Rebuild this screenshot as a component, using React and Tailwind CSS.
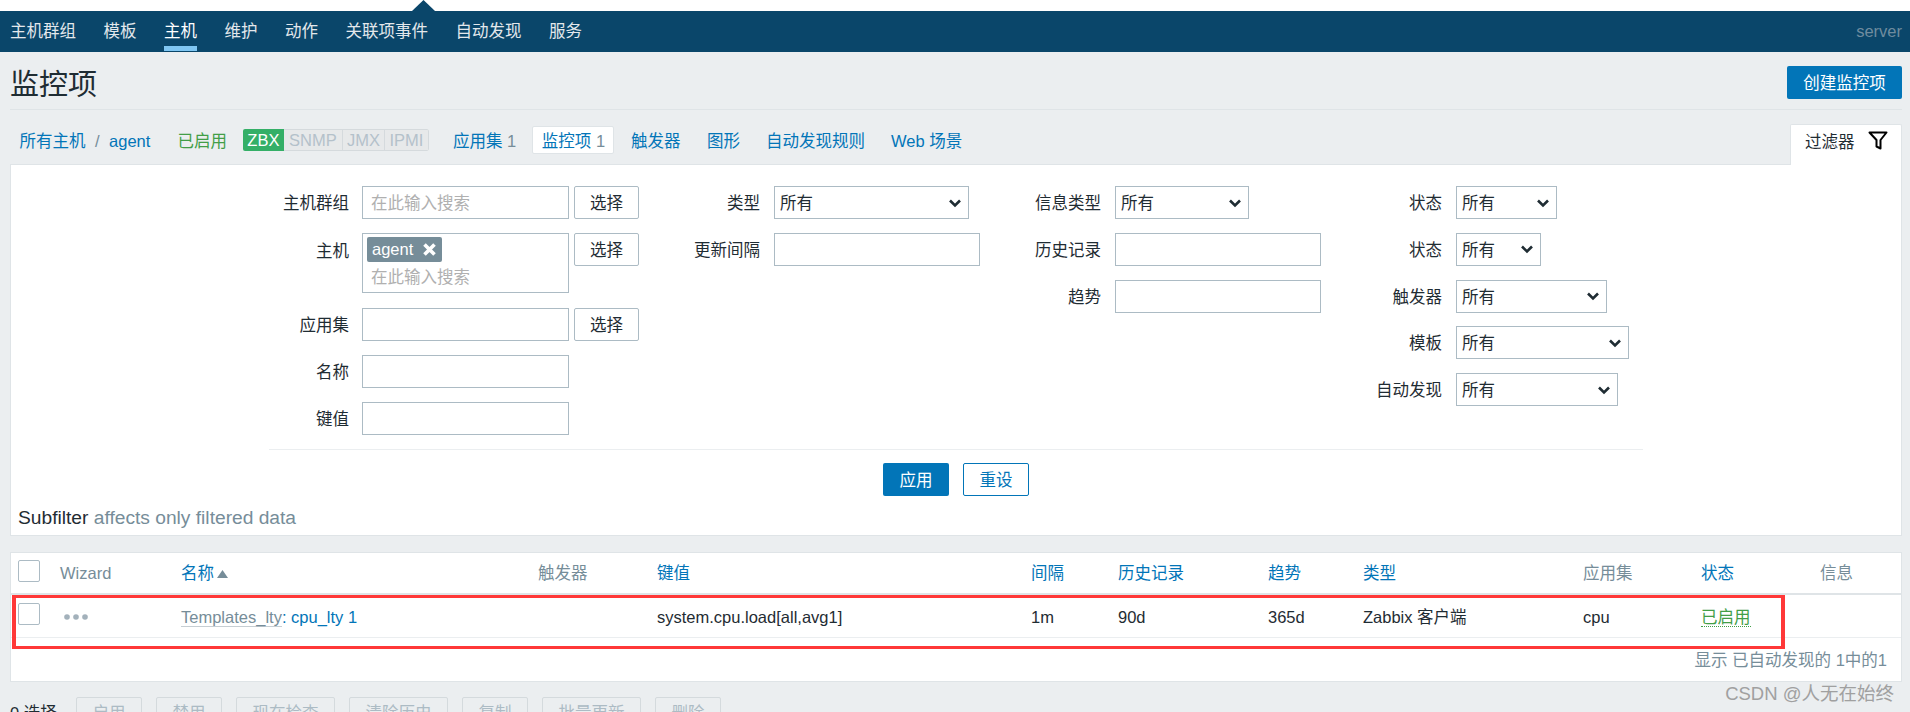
import { useState } from 'react';

const navItems = ['主机群组', '模板', '主机', '维护', '动作', '关联项事件', '自动发现', '服务'];
const bottomButtons = [
  ['启用', 'w-[66px]'],
  ['禁用', 'w-[66px]'],
  ['现在检查', 'w-[99px]'],
  ['清除历史', 'w-[99px]'],
  ['复制', 'w-[66px]'],
  ['批量更新', 'w-[99px]'],
  ['删除', 'w-[66px]'],
];

const Chevron = () => (
  <svg width="12" height="10" viewBox="0 0 12 10" fill="none" stroke="#1f2c33" strokeWidth="2.6">
    <path d="M1 2.5 L6 7.5 L11 2.5" />
  </svg>
);

const Field = ({ label, labelWidth, gap = 'mr-[13px]', children, tall }) => (
  <div className={`flex ${tall ? 'h-[60px] mb-px items-start' : 'h-[33px] items-center'}`}>
    <label className={`${labelWidth} ${gap} pt-[2px] shrink-0 text-right ${tall ? 'leading-[33px]' : ''}`}>{label}</label>
    {children}
  </div>
);

const Input = ({ width, placeholder }) => (
  <div className={`${width} h-[33px] border border-[#acbbc4] bg-white pl-[8px] leading-[33px] text-[#b0b0b0]`}>
    {placeholder}
  </div>
);

const Select = ({ width }) => (
  <div className={`${width} h-[33px] border border-[#acbbc4] bg-white pl-[5px] pr-[7px] flex items-center justify-between`}>
    <span className="pt-[2px]">所有</span>
    <Chevron />
  </div>
);

const PickButton = () => (
  <button className="ml-[5px] w-[65px] h-[33px] pt-[2px] border border-[#acbbc4] rounded-[2px] bg-white text-[#1f2c33]">选择</button>
);

const App = () => {
  const [activeNav] = useState('主机');

  return (
    <div className="relative w-[1910px] h-[712px] overflow-hidden bg-[#ebeef0] text-[16.5px] text-[#1f2c33] font-['Liberation_Sans','Noto_Sans_CJK_SC',sans-serif]">
      {/* top strip with the little arrow */}
      <div className="relative h-[11px] bg-white">
        <svg className="absolute left-[412px] top-0" width="23" height="11" viewBox="0 0 23 11">
          <path d="M11.5 0 L23 11 H0 Z" fill="#0a466a" />
        </svg>
      </div>

      {/* nav */}
      <nav className="h-[41px] bg-[#0a466a] flex items-center justify-between pl-[10px] pr-[8px]">
        <div className="flex h-full gap-[27.5px]">
          {navItems.map((item) => (
            <a key={item} className={`relative flex items-center h-full ${item === activeNav ? 'text-white' : 'text-[#e3e8ec]'}`}>
              {item}
              {item === activeNav && <span className="absolute left-0 right-0 bottom-px h-[5px] bg-[#7fc6f2]" />}
            </a>
          ))}
        </div>
        <span className="text-[#6f8c9f]">server</span>
      </nav>

      {/* title */}
      <header className="ml-[10px] mr-[8px] pt-[14px] h-[58px] border-b border-[#dfe4e7] flex justify-between items-start">
        <h1 className="text-[29px] leading-[33px] pt-[3px] font-normal">监控项</h1>
        <button className="w-[115px] h-[33px] pt-px bg-[#0275b8] text-white rounded-[2px]">创建监控项</button>
      </header>

      {/* sub nav */}
      <div className="ml-[10px] mr-[8px] h-[54px] flex items-end justify-between">
        <div className="h-[60px] flex items-center pl-[9.5px] self-start text-[#0275b8]">
          <a className="pt-[2px]">所有主机</a>
          <span className="ml-[9.5px] pt-[2px] text-[#768d99]">/</span>
          <a className="ml-[9.5px] pt-[2px]">agent</a>
          <span className="ml-[27px] pt-[2px] text-[#429e47]">已启用</span>
          <div className="ml-[16px] flex h-[22px] leading-[20px] rounded-[2px] overflow-hidden">
            <span className="w-[41px] text-center leading-[22px] bg-[#34af67] text-white">ZBX</span>
            <span className="w-[59px] text-center bg-[#e7e9ea] text-[#b4c1ca] border border-l-0 border-[#d5dadd]">SNMP</span>
            <span className="w-[42px] text-center bg-[#e7e9ea] text-[#b4c1ca] border border-l-0 border-[#d5dadd]">JMX</span>
            <span className="w-[44px] text-center bg-[#e7e9ea] text-[#b4c1ca] border border-l-0 border-[#d5dadd] rounded-r-[2px]">IPMI</span>
          </div>
          <a className="ml-[24px] pt-[2px]">应用集 <span className="text-[#768d99]">1</span></a>
          <a className="ml-[16.3px] w-[82px] h-[28px] leading-[28px] text-center bg-white border border-[#dfe4e7] rounded-[2px]">监控项 <span className="text-[#768d99]">1</span></a>
          <a className="ml-[16.5px] pt-[2px]">触发器</a>
          <a className="ml-[26.5px] pt-[2px]">图形</a>
          <a className="ml-[26px] pt-[2px]">自动发现规则</a>
          <a className="ml-[26px] pt-[2px]">Web 场景</a>
        </div>
        <div className="w-[112px] h-[41px] -mb-px relative bg-white rounded-t-[2px] border border-b-0 border-[#dfe4e7] flex items-start pl-[14px] pt-[3px]">
          <span className="leading-[28px]">过滤器</span>
          <svg className="ml-[13px] mt-[3px]" width="20" height="19" viewBox="0 0 20 19" fill="none" stroke="#000" strokeWidth="2">
            <path d="M1.5 1.5 H18.5 L12.5 9 V17.5 L8.5 15.5 V9 Z" strokeLinejoin="round" />
          </svg>
        </div>
      </div>

      {/* filter panel */}
      <section className="ml-[10px] mr-[8px] h-[372px] bg-white border border-[#dfe4e7] pt-[21px]">
        <div className="flex h-[249px]">
          <div className="w-[669px] flex flex-col gap-[14px]">
            <Field label="主机群组" labelWidth="w-[338px]">
              <Input width="w-[207px]" placeholder="在此输入搜索" />
              <PickButton />
            </Field>
            <Field label="主机" labelWidth="w-[338px]" tall>
              <div className="w-[207px] h-[60px] border border-[#acbbc4] bg-white pl-[4px] pt-[3px]">
                <div className="w-[75px] h-[25px] bg-[#768d99] rounded-[2px] text-white flex items-center pl-[5px] gap-[10px]">
                  <span>agent</span>
                  <svg width="13" height="13" viewBox="0 0 13 13" stroke="#fff" strokeWidth="3.6" fill="none">
                    <path d="M1.5 1.5 L11.5 11.5 M11.5 1.5 L1.5 11.5" />
                  </svg>
                </div>
                <div className="pl-[4px] mt-[2px] leading-[26px] text-[#b0b0b0]">在此输入搜索</div>
              </div>
              <PickButton />
            </Field>
            <Field label="应用集" labelWidth="w-[338px]">
              <Input width="w-[207px]" />
              <PickButton />
            </Field>
            <Field label="名称" labelWidth="w-[338px]">
              <Input width="w-[207px]" />
            </Field>
            <Field label="键值" labelWidth="w-[338px]">
              <Input width="w-[207px]" />
            </Field>
          </div>

          <div className="w-[340px] flex flex-col gap-[14px]">
            <Field label="类型" labelWidth="w-[80px]" gap="mr-[14px]"><Select width="w-[195px]" /></Field>
            <Field label="更新间隔" labelWidth="w-[80px]" gap="mr-[14px]"><Input width="w-[206px]" /></Field>
          </div>

          <div className="w-[342px] flex flex-col gap-[14px]">
            <Field label="信息类型" labelWidth="w-[81px]" gap="mr-[14px]"><Select width="w-[134px]" /></Field>
            <Field label="历史记录" labelWidth="w-[81px]" gap="mr-[14px]"><Input width="w-[206px]" /></Field>
            <Field label="趋势" labelWidth="w-[81px]" gap="mr-[14px]"><Input width="w-[206px]" /></Field>
          </div>

          <div className="flex flex-col gap-[13.75px]">
            <Field label="状态" labelWidth="w-[80px]" gap="mr-[14px]"><Select width="w-[101px]" /></Field>
            <Field label="状态" labelWidth="w-[80px]" gap="mr-[14px]"><Select width="w-[85px]" /></Field>
            <Field label="触发器" labelWidth="w-[80px]" gap="mr-[14px]"><Select width="w-[151px]" /></Field>
            <Field label="模板" labelWidth="w-[80px]" gap="mr-[14px]"><Select width="w-[173px]" /></Field>
            <Field label="自动发现" labelWidth="w-[80px]" gap="mr-[14px]"><Select width="w-[162px]" /></Field>
          </div>
        </div>

        <div className="ml-[258px] w-[1374px] mt-[14px] border-t border-[#ebeef0]" />

        <div className="mt-[13px] flex justify-center gap-[14px]">
          <button className="w-[66px] h-[33px] pt-px bg-[#0275b8] text-white rounded-[2px]">应用</button>
          <button className="w-[66px] h-[33px] pt-px bg-white border border-[#0275b8] text-[#0275b8] rounded-[2px]">重设</button>
        </div>

        <p className="mt-[12px] pl-[7px] text-[19.2px] leading-[20px]">
          Subfilter <span className="text-[#768d99]">affects only filtered data</span>
        </p>
      </section>

      {/* items table */}
      <section className="mt-[16px] ml-[10px] mr-[8px] h-[130px] bg-white border border-[#dfe4e7]">
        <div className="h-[42px] pl-[7px] pt-px border-b-2 border-[#dfe4e7] grid grid-cols-[42px_121px_357px_119px_374px_87px_150px_95px_220px_118px_119px_1fr] items-center text-[#0275b8]">
          <span className="block self-start mt-[6px] w-[22px] h-[22px] border border-[#acbbc4] rounded-[2px] bg-white" />
          <span className="text-[#768d99]">Wizard</span>
          <span className="flex items-center gap-[3px]">
            名称
            <svg width="11" height="8" viewBox="0 0 11 8"><path d="M5.5 0 L11 8 H0 Z" fill="#768d99" /></svg>
          </span>
          <span className="text-[#768d99]">触发器</span>
          <span>键值</span>
          <span>间隔</span>
          <span>历史记录</span>
          <span>趋势</span>
          <span>类型</span>
          <span className="text-[#768d99]">应用集</span>
          <span>状态</span>
          <span className="text-[#768d99]">信息</span>
        </div>
        <div className="h-[43px] pl-[7px] pt-[2px] border-b border-[#ebeef0] grid grid-cols-[42px_121px_357px_119px_374px_87px_150px_95px_220px_118px_119px_1fr] items-center">
          <span className="block self-start mt-[6px] w-[22px] h-[22px] border border-[#acbbc4] rounded-[2px] bg-white" />
          <svg className="ml-[4px]" width="24" height="6" viewBox="0 0 24 6" fill="#a3b1bb">
            <circle cx="3" cy="3" r="2.8" />
            <circle cx="12" cy="3" r="2.8" />
            <circle cx="21" cy="3" r="2.8" />
          </svg>
          <span>
            <a className="text-[#768d99] border-b border-[#c6ced3]">Templates_lty</a>
            <span className="text-[#0275b8]">: cpu_lty 1</span>
          </span>
          <span />
          <span>system.cpu.load[all,avg1]</span>
          <span>1m</span>
          <span>90d</span>
          <span>365d</span>
          <span>Zabbix 客户端</span>
          <span>cpu</span>
          <span><span className="text-[#429e47] border-b border-dotted border-[#429e47]">已启用</span></span>
          <span />
        </div>
        <div className="h-[43px] pt-[2px] flex items-center justify-end pr-[14px] text-[#768d99]">显示 已自动发现的 1中的1</div>
      </section>

      {/* action bar, cut off by the window */}
      <div className="mt-[15px] ml-[10px] flex items-start">
        <span className="mr-[18px] w-[48px] whitespace-nowrap leading-[33px]">0 选择</span>
        <div className="flex gap-[14px]">
          {bottomButtons.map(([label, width]) => (
            <button key={label} className={`${width} h-[33px] bg-[#ebeef0] border border-[#d4dadd] rounded-[2px] text-[#acbbc4]`}>{label}</button>
          ))}
        </div>
      </div>

      {/* red annotation box */}
      <div className="absolute left-[12px] top-[595px] w-[1773px] h-[54px] border-y-[3px] border-x-4 border-[#ff3838]" />

      {/* watermark */}
      <div className="absolute right-[16px] top-[683px] text-[18.5px] leading-[22px] text-[#a0a0a0]">CSDN @人无在始终</div>
    </div>
  );
};

export default App;
